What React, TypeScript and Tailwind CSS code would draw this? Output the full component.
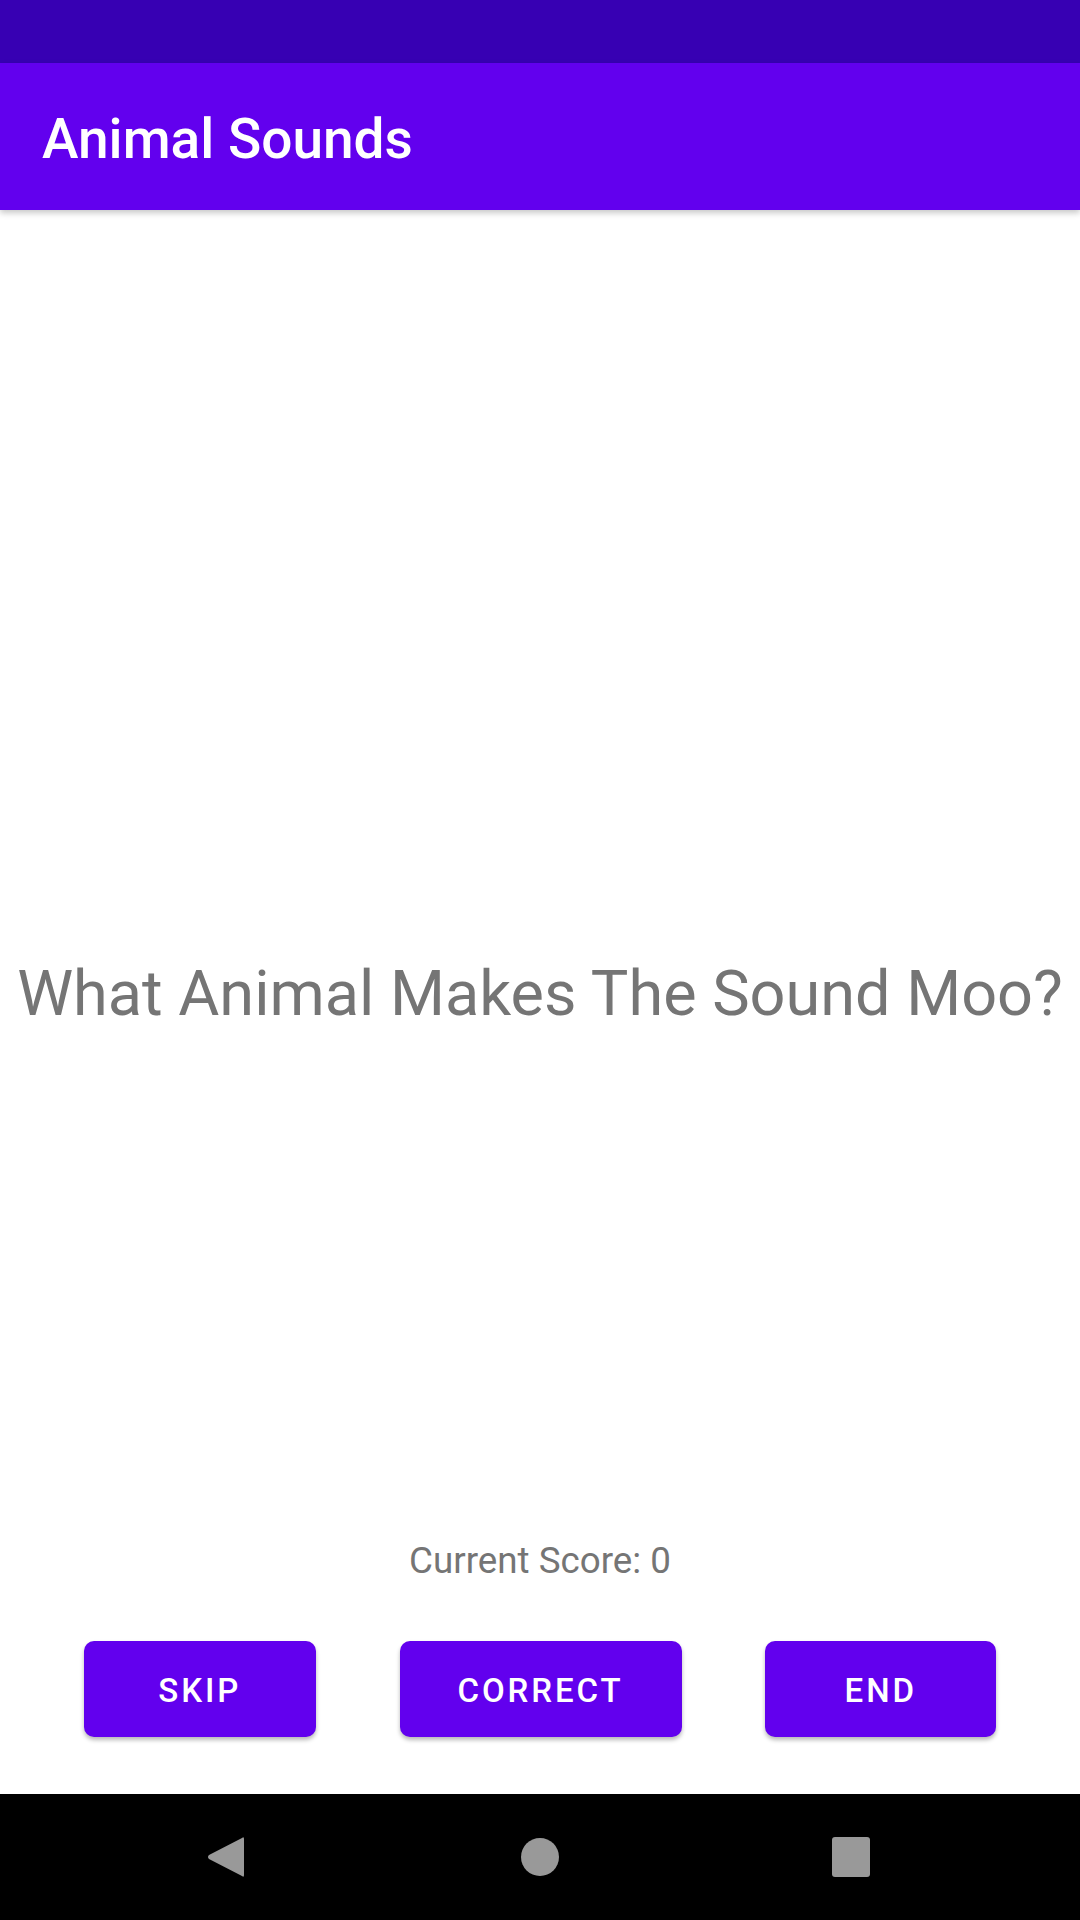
import React from "react";

const font = { fontFamily: "Roboto, 'Noto Sans', sans-serif" };

function Btn({ label, w }: { label: string; w: string }) {
  return (
    <div
      className={`${w} h-[96px] rounded-[10px] bg-[#6200EE] flex items-center justify-center text-white font-medium text-[33px] tracking-[2.9px] shadow-[0_3px_4px_rgba(0,0,0,0.28)]`}
    >
      <span className="pt-[3px]">{label}</span>
    </div>
  );
}

export default function App() {
  return (
    <div className="w-[1080px] h-[1920px] flex flex-col bg-white overflow-hidden" style={font}>
      <div className="h-[63px] bg-[#3700B3] shrink-0" />
      <div className="h-[147px] bg-[#6200EE] shrink-0 flex items-center pl-[42px] pt-[6px] shadow-[0_3px_6px_rgba(0,0,0,0.22)] relative z-10">
        <span className="text-white font-medium text-[55px] leading-none">Animal Sounds</span>
      </div>
      <div className="flex-1 flex flex-col items-center">
        <div className="mt-[747px] text-[63px] leading-[74px] text-[#757575] whitespace-nowrap">
          What Animal Makes The Sound Moo?
        </div>
        <div className="flex-1" />
        <div className="text-[36.75px] leading-[43px] text-[#757575]">Current Score: 0</div>
        <div className="mt-[59px] mb-[57px] w-full flex justify-evenly">
          <Btn label="SKIP" w="w-[232px]" />
          <Btn label="CORRECT" w="w-[282px]" />
          <Btn label="END" w="w-[231px]" />
        </div>
      </div>
      <div className="h-[126px] bg-black shrink-0 flex items-center pl-[207px]">
        <svg width="37" height="42" viewBox="0 0 37 42" className="shrink-0">
          <path d="M35 2 Q37 0 37 3 L37 39 Q37 42 35 40 L2 23 Q0 21 2 19 Z" fill="#999999" />
        </svg>
        <div className="ml-[277px] w-[38px] h-[38px] rounded-full bg-[#999999] shrink-0" />
        <div className="ml-[273px] w-[38px] h-[40px] rounded-[3px] bg-[#999999] shrink-0" />
      </div>
    </div>
  );
}
